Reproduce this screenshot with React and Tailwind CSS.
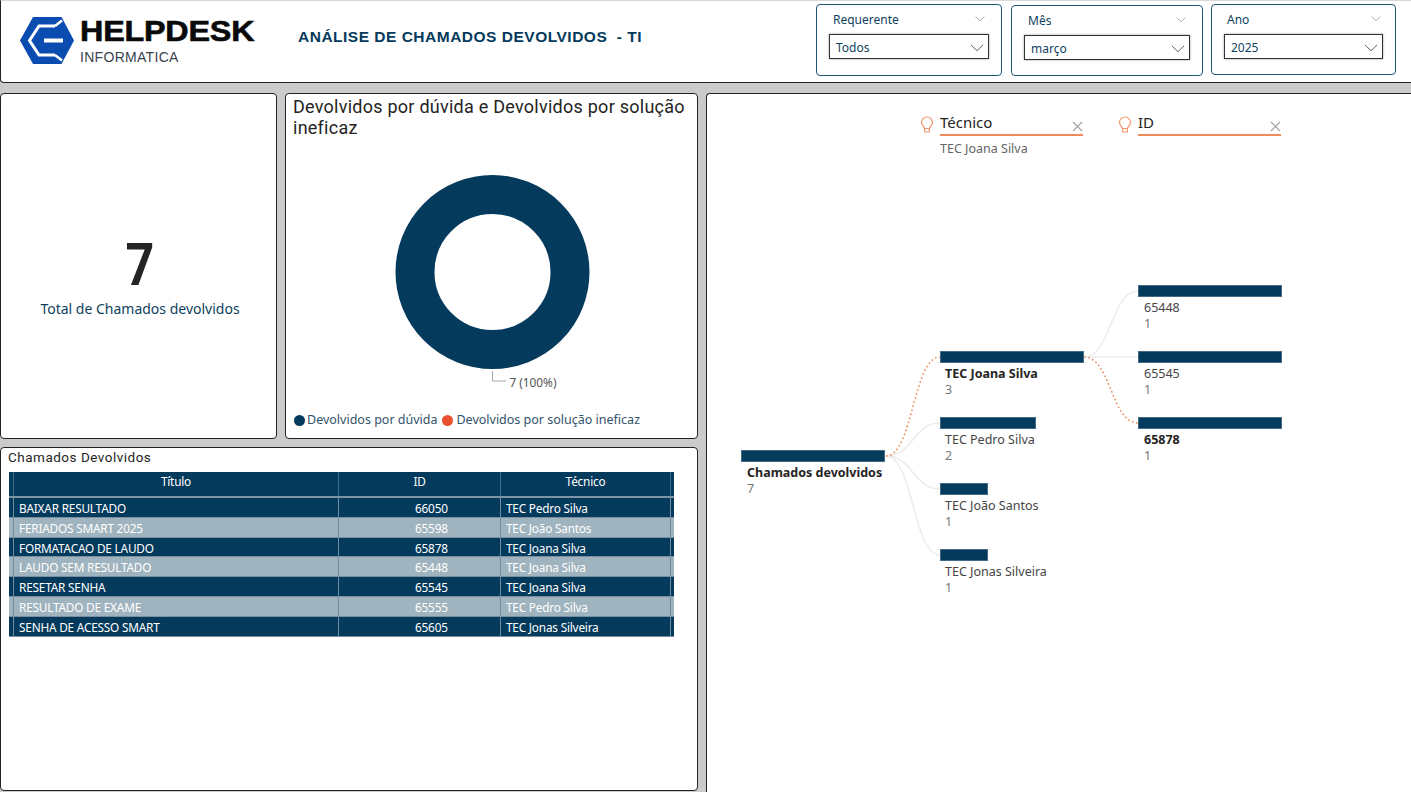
import React from "react";

const NAVY = "#043a5c";
const SANS = "font-['Noto_Sans',sans-serif]";

function Chevron({ size = 14, color = "#5b6b76", className = "" }) {
  return (
    <svg width={size} height={size * 0.55} viewBox="0 0 14 8" className={className} fill="none">
      <path d="M0.6 0.8 L7 7 L13.4 0.8" stroke={color} strokeWidth="1" />
    </svg>
  );
}

function Slicer({ label, value, className, pad }) {
  return (
    <div className={`rounded-[4px] border border-[#1f5673] bg-white flex flex-col ${className}`}>
      <div className={`flex items-center justify-between h-[29px] pt-[1px] ${pad}`}>
        <span className="text-[12px] text-[#0f3f5e]">{label}</span>
        <Chevron size={10} color="#7d868d" className="-mt-[3px]" />
      </div>
      <div className="mx-[12px] h-[25px] border border-[#333] shadow-[0_0_2px_#999] flex items-center justify-between pl-[6px] pr-[4px] pt-[3px]">
        <span className="text-[12px] text-[#0f3f5e]">{value}</span>
        <Chevron size={14} color="#4a5d6b" />
      </div>
    </div>
  );
}

function Logo() {
  return (
    <svg width="56" height="49" viewBox="0 0 56 49" className="shrink-0" fill="none">
      <polygon points="14,1 42.5,1 55,24.5 42.5,48 14,48 1,24.5" fill="#0a4cb0" />
      <path d="M36 10 L20 10 L10.5 24.5 L20 39 L36 39" stroke="#fff" strokeWidth="3" />
      <path d="M36 10 L43 4.5 M36 39 L43 44.5" stroke="#fff" strokeWidth="2.6" />
      <path d="M25 24.5 H44" stroke="#fff" strokeWidth="4" />
      <path d="M32 15 L38 15 L38 20 L32 20 Z M32 29 L38 29 L38 34 L32 34 Z" fill="#0a4cb0" />
    </svg>
  );
}

const rows = [
  ["BAIXAR RESULTADO", "66050", "TEC Pedro Silva"],
  ["FERIADOS SMART 2025", "65598", "TEC João Santos"],
  ["FORMATACAO DE LAUDO", "65878", "TEC Joana Silva"],
  ["LAUDO SEM RESULTADO", "65448", "TEC Joana Silva"],
  ["RESETAR SENHA", "65545", "TEC Joana Silva"],
  ["RESULTADO DE EXAME", "65555", "TEC Pedro Silva"],
  ["SENHA DE ACESSO SMART", "65605", "TEC Jonas Silveira"],
];

function Table() {
  return (
    <div className="mx-[8px] mt-[6px] w-[665px] text-white text-[11.8px] tracking-[-0.2px]">
      <div className="flex h-[26px] bg-[#043a5c] border-b-2 border-[#7d94a6] items-center">
        <div className="w-[5px] h-full border-r border-[#3f6a86]" />
        <div className="w-[325px] h-full border-r border-[#3f6a86] flex items-center justify-center pb-[4px]">Título</div>
        <div className="w-[162px] h-full border-r border-[#3f6a86] flex items-center justify-center pb-[4px]">ID</div>
        <div className="w-[170px] h-full border-r border-[#3f6a86] flex items-center justify-center pb-[4px]">Técnico</div>
      </div>
      {rows.map((r, i) => (
        <div
          key={r[1]}
          className={`flex h-[19.8px] items-center border-b border-[#7a8fa0] ${i % 2 ? "bg-[#9fb4be]" : "bg-[#043a5c]"}`}
        >
          <div className="w-[5px] h-full border-r border-[#6f8ba0]" />
          <div className="w-[325px] h-full border-r border-[#6f8ba0] flex items-center pl-[5px] pt-[3px]">{r[0]}</div>
          <div className="w-[162px] h-full border-r border-[#6f8ba0] flex items-center pl-[76px] pt-[3px]">{r[1]}</div>
          <div className="w-[170px] h-full border-r border-[#6f8ba0] flex items-center pl-[5px] pt-[3px]">{r[2]}</div>
        </div>
      ))}
    </div>
  );
}

function TreeNode({ x, y, w, label, value, bold, tx = 5 }) {
  return (
    <div className="absolute" style={{ left: x, top: y }}>
      <div className="h-[12px] bg-[#043a5c] border border-[#6f8ba0]/60" style={{ width: w }} />
      <div
        className={`mt-[3px] text-[12.5px] leading-[16px] whitespace-nowrap ${bold ? "font-bold text-[#252423]" : "text-[#444]"}`}
        style={{ marginLeft: tx }}
      >
        {label}
      </div>
      <div className="text-[12.5px] leading-[16px] text-[#777]" style={{ marginLeft: tx }}>{value}</div>
    </div>
  );
}

function Bulb() {
  return (
    <svg width="14" height="18" viewBox="0 0 14 18" fill="none" stroke="#f0956b" strokeWidth="1.2" className="shrink-0">
      <path d="M4.5 12.5 C4.5 10.5 1.5 9.5 1.5 6.5 A5.5 5.5 0 0 1 12.5 6.5 C12.5 9.5 9.5 10.5 9.5 12.5 Z" />
      <path d="M4.7 12.5 V16 H9.3 V12.5" />
    </svg>
  );
}

function TreeHead({ x, label, sub }) {
  return (
    <div className="absolute flex gap-[6px]" style={{ left: x, top: 21 }}>
      <div className="pt-[1px]"><Bulb /></div>
      <div className="w-[143px]">
        <div className="flex items-end justify-between h-[21px] border-b-2 border-[#f08a5d] pb-[1px]">
          <span className="text-[15px] leading-[18px] mb-[2px] text-[#252423]">{label}</span>
          <svg width="11" height="11" viewBox="0 0 11 11" className="mb-[1px]" stroke="#a8a8a8" strokeWidth="1.3"><path d="M1 1 L10 10 M10 1 L1 10" /></svg>
        </div>
        {sub && <div className="mt-[5px] text-[12.5px] leading-[16px] text-[#666]">{sub}</div>}
      </div>
    </div>
  );
}

function Tree() {
  const lines = [
    ["M179 362 C206 362 206 263 233 263", true],
    ["M179 362 C206 362 206 329 233 329"],
    ["M179 362 C206 362 206 395 233 395"],
    ["M179 362 C206 362 206 461 233 461"],
    ["M377 263 C404 263 404 197 431 197"],
    ["M377 263 L431 263"],
    ["M377 263 C404 263 404 329 431 329", true],
  ];
  return (
    <div className="relative flex-1 bg-white border-l border-t border-[#222] rounded-tl-[4px] overflow-hidden">
      <TreeHead x={213} label="Técnico" sub="TEC Joana Silva" />
      <TreeHead x={411} label="ID" />
      <svg className="absolute left-0 top-0" width="705" height="699" fill="none">
        {lines.filter((l) => !l[1]).map((l) => (
          <path key={l[0]} d={l[0]} stroke="#ececec" strokeWidth="1.5" />
        ))}
        {lines.filter((l) => l[1]).map((l) => (
          <path key={l[0]} d={l[0]} stroke="#f08a5d" strokeWidth="1.6" strokeDasharray="1.6 2.6" />
        ))}
      </svg>
      <TreeNode x={34} y={356} w={144} label="Chamados devolvidos" value="7" bold tx={6} />
      <TreeNode x={233} y={257} w={144} label="TEC Joana Silva" value="3" bold />
      <TreeNode x={233} y={323} w={96} label="TEC Pedro Silva" value="2" />
      <TreeNode x={233} y={389} w={48} label="TEC João Santos" value="1" />
      <TreeNode x={233} y={455} w={48} label="TEC Jonas Silveira" value="1" />
      <TreeNode x={431} y={191} w={144} label="65448" value="1" tx={6} />
      <TreeNode x={431} y={257} w={144} label="65545" value="1" tx={6} />
      <TreeNode x={431} y={323} w={144} label="65878" value="1" bold tx={6} />
    </div>
  );
}

export default function App() {
  return (
    <div className={`${SANS} w-[1411px] h-[792px] overflow-hidden bg-[#cbcbcb] flex flex-col`}>
      <header className="h-[83px] shrink-0 bg-white border-b border-l border-[#222] rounded-bl-[4px] flex items-start border-t border-t-[#d8d8d8]">
        <div className="ml-[18px] mt-[15px]"><Logo /></div>
        <div className="ml-[5px] mt-[15px] w-[176px] flex flex-col">
          <span className="font-['Liberation_Sans',sans-serif] font-bold text-[29px] leading-[30px] tracking-[-0.2px] text-[#0a0a0a] [-webkit-text-stroke:0.6px_#0a0a0a] origin-left scale-x-[1.115] whitespace-nowrap">HELPDESK</span>
          <span className="font-['Liberation_Sans',sans-serif] text-[14px] leading-[16px] mt-[3px] tracking-[0.3px] text-[#3a4450]">INFORMATICA</span>
        </div>
        <div className="ml-[42px] mt-[27px] font-['Liberation_Sans',sans-serif] font-bold text-[15.5px] leading-[18px] tracking-[0.5px] whitespace-pre text-[#043a5c]">ANÁLISE DE CHAMADOS DEVOLVIDOS  - TI</div>
        <div className="ml-auto mr-[15px] flex items-start mt-[3px]">
          <Slicer label="Requerente" value="Todos" className="w-[186px] h-[72px]" pad="pl-[16px] pr-[16px]" />
          <Slicer label="Mês" value="março" className="w-[192px] h-[71px] mt-[1px] ml-[9px]" pad="pl-[16px] pr-[16px]" />
          <Slicer label="Ano" value="2025" className="w-[185px] h-[71px] ml-[8px]" pad="pl-[15px] pr-[14px]" />
        </div>
      </header>
      <div className="flex-1 flex gap-[8px] pt-[10px] min-h-0">
        <div className="w-[698px] shrink-0 flex flex-col gap-[8px]">
          <div className="flex gap-[8px] h-[346px] shrink-0">
            <div className="w-[277px] bg-white border border-[#222] rounded-[4px] flex flex-col items-center pt-[137px] pl-[3px]">
              <div className="font-['Roboto',sans-serif] font-bold text-[59px] leading-[68px] text-[#252423] scale-x-[0.85]">7</div>
              <div className="text-[14px] leading-[20px] text-[#0f3f5e]">Total de Chamados devolvidos</div>
            </div>
            <div className="flex-1 bg-white border border-[#222] rounded-[4px] flex flex-col px-[7px] pt-[2px]">
              <div className="font-['Roboto',sans-serif] text-[18px] leading-[21px] tracking-[0.25px] text-[#252423]">
                Devolvidos por dúvida e Devolvidos por solução ineficaz
              </div>
              <div className="relative self-center mt-[37px] ml-[2px] w-[240px] h-[222px]">
                <svg width="240" height="222" viewBox="0 0 240 222" fill="none">
                  <circle cx="119.5" cy="97" r="77.5" stroke={NAVY} strokeWidth="39" />
                  <path d="M119.5 196 V206 H133" stroke="#a8a8a8" />
                </svg>
                <span className="absolute left-[137px] top-[199px] text-[11.8px] leading-[16px] text-[#555] whitespace-nowrap">7 (100%)</span>
              </div>
              <div className="flex items-center mt-[15px] text-[12.5px] leading-[16px] text-[#33536b] whitespace-nowrap">
                <span className="w-[11px] h-[11px] rounded-full bg-[#043a5c] ml-[1px] mr-[2px]" />
                <span>Devolvidos por dúvida</span>
                <span className="w-[11px] h-[11px] rounded-full bg-[#e8502f] ml-[5px] mr-[3px]" />
                <span>Devolvidos por solução ineficaz</span>
              </div>
            </div>
          </div>
          <div className="h-[344px] shrink-0 bg-white border border-[#222] rounded-[4px]">
            <div className="pl-[7px] font-['Roboto',sans-serif] text-[13.5px] leading-[18px] tracking-[0.5px] text-[#252423]">Chamados Devolvidos</div>
            <Table />
          </div>
        </div>
        <Tree />
      </div>
    </div>
  );
}
